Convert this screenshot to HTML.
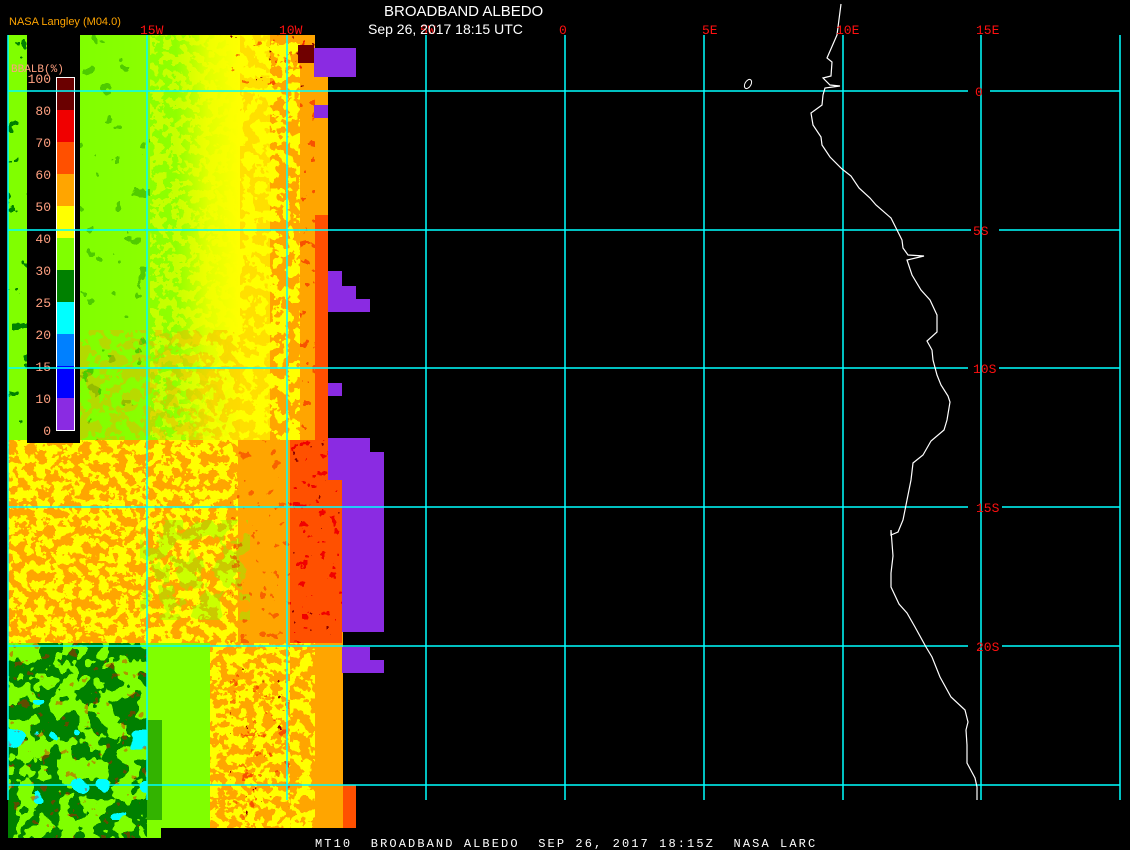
<!DOCTYPE html>
<html><head><meta charset="utf-8"><style>
html,body{margin:0;padding:0;background:#000;}
body{width:1130px;height:850px;overflow:hidden;position:relative;}
svg{position:absolute;left:0;top:0;}
</style></head><body>
<svg width="1130" height="850" viewBox="0 0 1130 850" xmlns="http://www.w3.org/2000/svg">
<defs>
<filter id="fo" x="0" y="0" width="100%" height="100%" filterUnits="objectBoundingBox">
 <feTurbulence type="fractalNoise" baseFrequency="0.09" numOctaves="3" seed="3" result="n"/>
 <feColorMatrix in="n" type="matrix" values="0 0 0 0 0  0 0 0 0 0  0 0 0 0 0  1 0 0 0 0" result="a"/>
 <feComponentTransfer in="a" result="t"><feFuncA type="discrete" tableValues="0 0 0 0 0 1 1 1 1 1"/></feComponentTransfer>
 <feFlood flood-color="#ffa500"/><feComposite in2="t" operator="in"/>
</filter>
<filter id="fy" x="0" y="0" width="100%" height="100%" filterUnits="objectBoundingBox">
 <feTurbulence type="fractalNoise" baseFrequency="0.11" numOctaves="3" seed="7" result="n"/>
 <feColorMatrix in="n" type="matrix" values="0 0 0 0 0  0 0 0 0 0  0 0 0 0 0  1 0 0 0 0" result="a"/>
 <feComponentTransfer in="a" result="t"><feFuncA type="discrete" tableValues="0 0 0 0 0 1 1 1 1 1"/></feComponentTransfer>
 <feFlood flood-color="#ffff00"/><feComposite in2="t" operator="in"/>
</filter>
<filter id="fr" x="0" y="0" width="100%" height="100%" filterUnits="objectBoundingBox">
 <feTurbulence type="fractalNoise" baseFrequency="0.1" numOctaves="3" seed="11" result="n"/>
 <feColorMatrix in="n" type="matrix" values="0 0 0 0 0  0 0 0 0 0  0 0 0 0 0  1 0 0 0 0" result="a"/>
 <feComponentTransfer in="a" result="t"><feFuncA type="discrete" tableValues="0 0 0 0 0 0 0 1 1 1"/></feComponentTransfer>
 <feFlood flood-color="#f00000"/><feComposite in2="t" operator="in"/>
</filter>
<filter id="fd" x="0" y="0" width="100%" height="100%" filterUnits="objectBoundingBox">
 <feTurbulence type="fractalNoise" baseFrequency="0.12" numOctaves="3" seed="17" result="n"/>
 <feColorMatrix in="n" type="matrix" values="0 0 0 0 0  0 0 0 0 0  0 0 0 0 0  1 0 0 0 0" result="a"/>
 <feComponentTransfer in="a" result="t"><feFuncA type="discrete" tableValues="0 0 0 0 0 0 0 0 1 1"/></feComponentTransfer>
 <feFlood flood-color="#8a0000"/><feComposite in2="t" operator="in"/>
</filter>
<filter id="fg" x="0" y="0" width="100%" height="100%" filterUnits="objectBoundingBox">
 <feTurbulence type="fractalNoise" baseFrequency="0.06" numOctaves="3" seed="5" result="n"/>
 <feColorMatrix in="n" type="matrix" values="0 0 0 0 0  0 0 0 0 0  0 0 0 0 0  1 0 0 0 0" result="a"/>
 <feComponentTransfer in="a" result="t"><feFuncA type="discrete" tableValues="0 0 0 0 0 0 0 1 1 1"/></feComponentTransfer>
 <feFlood flood-color="#008000"/><feComposite in2="t" operator="in"/>
</filter>
<filter id="fl" x="0" y="0" width="100%" height="100%" filterUnits="objectBoundingBox">
 <feTurbulence type="fractalNoise" baseFrequency="0.05" numOctaves="3" seed="9" result="n"/>
 <feColorMatrix in="n" type="matrix" values="0 0 0 0 0  0 0 0 0 0  0 0 0 0 0  1 0 0 0 0" result="a"/>
 <feComponentTransfer in="a" result="t"><feFuncA type="discrete" tableValues="0 0 0 0 0 1 1 1 1 1"/></feComponentTransfer>
 <feFlood flood-color="#80ff00"/><feComposite in2="t" operator="in"/>
</filter>
<filter id="fc" x="0" y="0" width="100%" height="100%" filterUnits="objectBoundingBox">
 <feTurbulence type="fractalNoise" baseFrequency="0.04" numOctaves="2" seed="13" result="n"/>
 <feColorMatrix in="n" type="matrix" values="0 0 0 0 0  0 0 0 0 0  0 0 0 0 0  1 0 0 0 0" result="a"/>
 <feComponentTransfer in="a" result="t"><feFuncA type="discrete" tableValues="0 0 0 0 0 0 0 1 1 1"/></feComponentTransfer>
 <feFlood flood-color="#00ffff"/><feComposite in2="t" operator="in"/>
</filter>
<linearGradient id="gy" x1="0" x2="1" y1="0" y2="0">
 <stop offset="0" stop-color="#80ff00"/><stop offset="0.6" stop-color="#90ff00"/><stop offset="0.8" stop-color="#e0ff00"/><stop offset="1" stop-color="#ffff00"/>
</linearGradient>
</defs>

<!-- upper data region -->
<rect x="8" y="35" width="19" height="408" fill="#80ff00"/>
<rect x="8" y="35" width="19" height="408" filter="url(#fg)"/>
<rect x="80" y="35" width="160" height="405" fill="url(#gy)"/>
<rect x="80" y="35" width="70" height="405" filter="url(#fg)" opacity="0.4"/>
<rect x="150" y="35" width="90" height="405" filter="url(#fy)" opacity="0.5"/>
<rect x="80" y="330" width="170" height="110" filter="url(#fo)" opacity="0.4"/>
<rect x="240" y="35" width="30" height="405" fill="#ffff00"/>
<rect x="240" y="35" width="30" height="405" filter="url(#fo)" opacity="0.35"/>
<rect x="270" y="35" width="30" height="405" fill="#ffff00"/>
<rect x="270" y="35" width="30" height="405" filter="url(#fo)"/>
<rect x="300" y="35" width="15" height="405" fill="#ffa500"/>
<rect x="300" y="35" width="15" height="405" filter="url(#fr)" opacity="0.5"/>
<rect x="230" y="35" width="85" height="50" filter="url(#fr)" opacity="0.5"/>
<rect x="230" y="35" width="85" height="60" filter="url(#fd)"/>
<rect x="315" y="215" width="13" height="225" fill="#ff5000"/>
<rect x="315" y="77" width="13" height="138" fill="#ffa500"/>
<rect x="298" y="45" width="16" height="18" fill="#700000"/>

<!-- middle region -->
<rect x="8" y="440" width="335" height="203" fill="#ffa500"/>
<rect x="8" y="440" width="230" height="203" filter="url(#fy)"/>
<rect x="140" y="520" width="110" height="100" filter="url(#fl)" opacity="0.4"/>
<rect x="230" y="440" width="60" height="203" filter="url(#fr)" opacity="0.4"/>
<rect x="290" y="440" width="52" height="203" fill="#ff5000"/>
<rect x="290" y="440" width="52" height="203" filter="url(#fr)"/>
<rect x="290" y="440" width="52" height="203" filter="url(#fd)"/>

<!-- bottom region -->
<rect x="8" y="643" width="139" height="195" fill="#008000"/>
<rect x="8" y="643" width="139" height="195" filter="url(#fl)"/>
<rect x="8" y="700" width="139" height="120" filter="url(#fc)"/>
<rect x="8" y="643" width="139" height="195" filter="url(#fr)" opacity="0.4"/>
<rect x="147" y="643" width="14" height="195" fill="#80ff00"/>
<rect x="147" y="643" width="90" height="185" fill="#80ff00"/>
<rect x="147" y="720" width="15" height="100" fill="#008000" opacity="0.6"/>
<rect x="210" y="643" width="80" height="185" fill="#ffa500"/>
<rect x="210" y="643" width="80" height="185" filter="url(#fy)"/>
<rect x="230" y="660" width="60" height="160" filter="url(#fr)" opacity="0.5"/>
<rect x="230" y="660" width="80" height="160" filter="url(#fd)"/>
<rect x="290" y="643" width="25" height="185" fill="#ffff00"/>
<rect x="290" y="643" width="25" height="185" filter="url(#fo)"/>
<rect x="315" y="643" width="28" height="185" fill="#ffa500"/>
<rect x="343" y="785" width="13" height="43" fill="#ff5000"/>

<!-- purple blocks -->
<g fill="#8a2be2">
<rect x="314" y="48" width="42" height="29"/>
<rect x="314" y="105" width="14" height="13"/>
<rect x="328" y="271" width="14" height="15"/>
<rect x="328" y="286" width="28" height="13"/>
<rect x="328" y="299" width="42" height="13"/>
<rect x="328" y="383" width="14" height="13"/>
<rect x="328" y="438" width="42" height="42"/>
<rect x="342" y="452" width="42" height="180"/>
<rect x="342" y="647" width="28" height="26"/>
<rect x="342" y="660" width="42" height="13"/>
</g>

<!-- legend -->
<rect x="27" y="35" width="53" height="408" fill="#000"/>
<g>
<rect x="57" y="78" width="17" height="16" fill="#6a0000"/>
<rect x="57" y="94" width="17" height="16" fill="#6a0000"/>
<rect x="57" y="110" width="17" height="32" fill="#f00000"/>
<rect x="57" y="142" width="17" height="32" fill="#ff5000"/>
<rect x="57" y="174" width="17" height="32" fill="#ffa500"/>
<rect x="57" y="206" width="17" height="32" fill="#ffff00"/>
<rect x="57" y="238" width="17" height="32" fill="#80ff00"/>
<rect x="57" y="270" width="17" height="32" fill="#008000"/>
<rect x="57" y="302" width="17" height="32" fill="#00ffff"/>
<rect x="57" y="334" width="17" height="32" fill="#0080ff"/>
<rect x="57" y="366" width="17" height="32" fill="#0000ff"/>
<rect x="57" y="398" width="17" height="32" fill="#8a2be2"/>
<rect x="56.5" y="77.5" width="18" height="353" fill="none" stroke="#fff" stroke-width="1"/>
</g>
<g font-family="Liberation Mono, monospace" font-size="13" fill="#ffa080" text-anchor="end">
<text x="51" y="83">100</text><text x="51" y="115">80</text><text x="51" y="147">70</text>
<text x="51" y="179">60</text><text x="51" y="211">50</text><text x="51" y="243">40</text>
<text x="51" y="275">30</text><text x="51" y="307">25</text><text x="51" y="339">20</text>
<text x="51" y="371">15</text><text x="51" y="403">10</text><text x="51" y="435">0</text>
</g>
<text x="11" y="72" font-family="Liberation Mono, monospace" font-size="11" fill="#ffa080">BBALB(%)</text>

<!-- grid -->
<g stroke="#00ffff" stroke-width="1.5">
<line x1="8" y1="35" x2="8" y2="800"/>
<line x1="147" y1="35" x2="147" y2="800"/>
<line x1="287" y1="35" x2="287" y2="800"/>
<line x1="426" y1="35" x2="426" y2="800"/>
<line x1="565" y1="35" x2="565" y2="800"/>
<line x1="704" y1="35" x2="704" y2="800"/>
<line x1="843" y1="35" x2="843" y2="800"/>
<line x1="981" y1="35" x2="981" y2="800"/>
<line x1="1120" y1="35" x2="1120" y2="800"/>
<line x1="8" y1="91" x2="968" y2="91"/><line x1="990" y1="91" x2="1120" y2="91"/>
<line x1="8" y1="230" x2="971" y2="230"/><line x1="999" y1="230" x2="1120" y2="230"/>
<line x1="8" y1="368" x2="968" y2="368"/><line x1="999" y1="368" x2="1120" y2="368"/>
<line x1="8" y1="507" x2="968" y2="507"/><line x1="1002" y1="507" x2="1120" y2="507"/>
<line x1="8" y1="646" x2="968" y2="646"/><line x1="1002" y1="646" x2="1120" y2="646"/>
<line x1="8" y1="785" x2="1120" y2="785"/>
</g>

<!-- coastline -->
<polyline fill="none" stroke="#fff" stroke-width="1.2" points="841,4 837,35 827,58 832,62 831,76 823,78 830,85 840,86 825,88 823,95 822,105 811,113 813,125 821,137 822,145 830,157 842,169 851,176 859,188 870,198 876,205 891,218 897,230 902,240 903,248 908,255 924,256 907,260 912,275 921,290 930,300 937,315 937,332 927,341 932,350 933,360 937,375 941,385 948,396 950,402 947,420 944,430 931,441 923,455 913,463 911,480 907,500 903,520 898,532 891,535 891,530 893,556 891,573 891,587 899,604 907,613 915,627 926,647 932,657 940,677 951,697 965,710 968,722 966,730 967,745 967,763 975,778 977,787 977,800"/>
<ellipse cx="748" cy="84" rx="3" ry="5" fill="none" stroke="#fff" stroke-width="1" transform="rotate(30 748 84)"/>

<!-- labels -->
<g font-family="Liberation Mono, monospace" font-size="13" fill="#ff1010">
<text x="140" y="34">15W</text><text x="279" y="34">10W</text><text x="420" y="34">5W</text>
<text x="559" y="34">0</text><text x="702" y="34">5E</text><text x="836" y="34">10E</text><text x="976" y="34">15E</text>
<text x="975" y="96">0</text><text x="973" y="235">5S</text><text x="973" y="373">10S</text>
<text x="976" y="512">15S</text><text x="976" y="651">20S</text>
</g>
<text x="9" y="25" font-family="Liberation Sans, sans-serif" font-size="11" fill="#ffa500">NASA Langley (M04.0)</text>
<text x="384" y="16" font-family="Liberation Sans, sans-serif" font-size="15" fill="#fff">BROADBAND ALBEDO</text>
<text x="368" y="34" font-family="Liberation Sans, sans-serif" font-size="14" fill="#fff">Sep 26, 2017 18:15 UTC</text>
<text x="315" y="847" font-family="Liberation Mono, monospace" font-size="12" fill="#fff" letter-spacing="2.1" style="white-space:pre" xml:space="preserve">MT10  BROADBAND ALBEDO  SEP 26, 2017 18:15Z  NASA LARC</text>
</svg>
</body></html>
